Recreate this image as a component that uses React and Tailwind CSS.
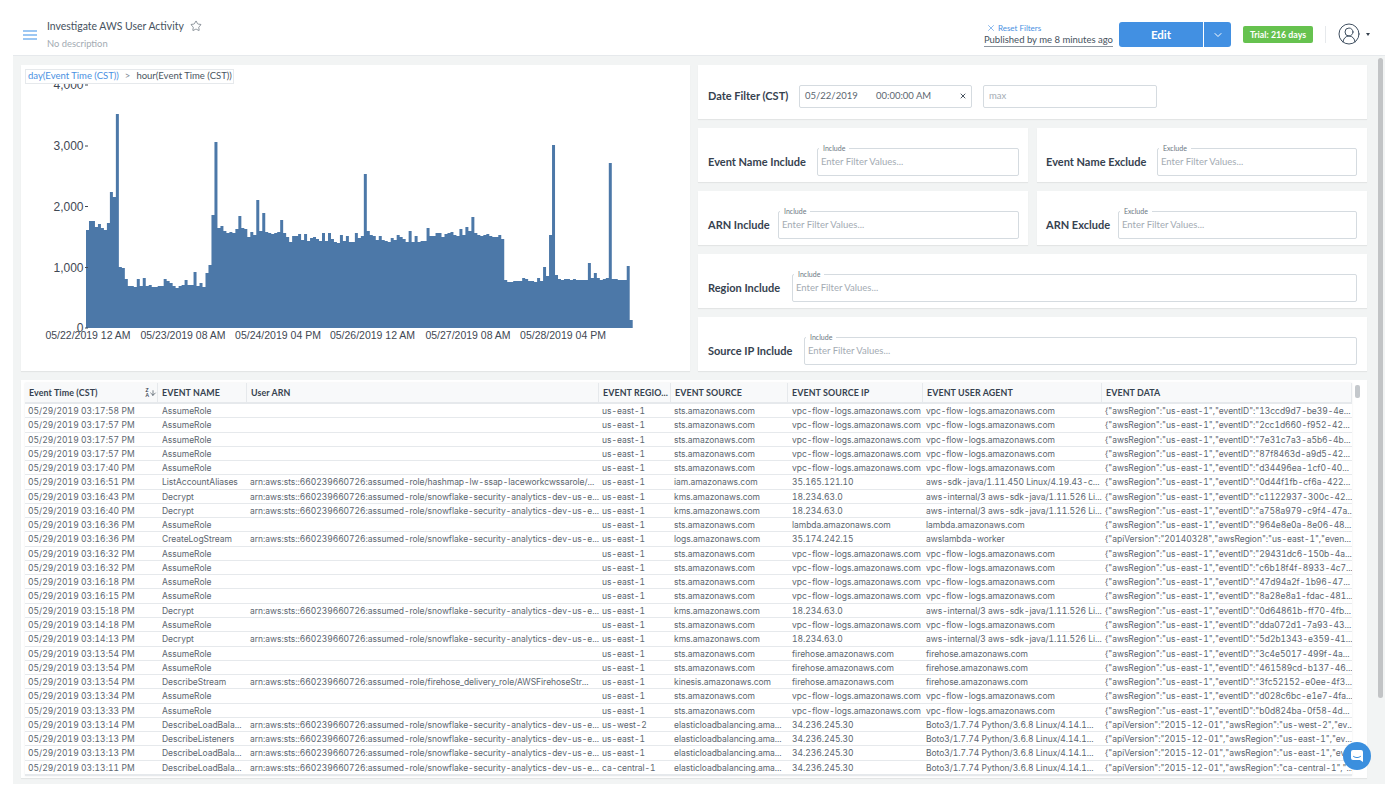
import React from "react";
import { Star, X, ChevronDown, CircleUserRound, ArrowDown } from "lucide-react";

const barHeights = [
  98, 107, 107, 101, 104, 100, 98, 105, 136, 131, 214, 61, 60, 49, 42, 42, 41, 49, 42, 50, 42, 43, 41, 41, 42, 42, 49,
  47, 45, 42, 40, 42, 43, 48, 43, 43, 56, 42, 45, 41, 55, 63, 113, 186, 100, 102, 97, 95, 96, 95, 99, 112, 100, 99, 91,
  96, 93, 128, 97, 115, 96, 95, 94, 95, 96, 108, 95, 91, 86, 92, 92, 94, 88, 94, 87, 90, 91, 89, 87, 95, 87, 95, 89, 86,
  85, 93, 87, 92, 86, 86, 95, 90, 92, 154, 97, 93, 92, 88, 92, 88, 87, 86, 90, 88, 93, 91, 89, 86, 97, 86, 92, 86, 87,
  87, 100, 92, 92, 95, 95, 91, 94, 95, 96, 93, 92, 99, 93, 101, 97, 111, 95, 93, 92, 93, 94, 92, 91, 91, 93, 89, 48, 46,
  46, 47, 47, 47, 50, 49, 47, 47, 46, 50, 47, 61, 52, 93, 183, 53, 49, 48, 49, 49, 48, 49, 48, 48, 48, 48, 65, 50, 55,
  50, 48, 49, 50, 165, 49, 49, 48, 48, 48, 62, 8,
];

const xLabels = [
  ["05/22/2019 12 AM", 88],
  ["05/23/2019 08 AM", 183],
  ["05/24/2019 04 PM", 278],
  ["05/26/2019 12 AM", 372.5],
  ["05/27/2019 08 AM", 468],
  ["05/28/2019 04 PM", 563],
];

const yLabels = [
  ["4,000", 85],
  ["3,000", 146],
  ["2,000", 206.5],
  ["1,000", 267.5],
  ["0", 328],
];

const barsPath = () => {
  const start = 86;
  const w = (632.7 - start) / barHeights.length;
  let d = `M${start} 328`;
  barHeights.forEach((h, i) => {
    d += `V${328 - h}H${(start + (i + 1) * w).toFixed(2)}`;
  });
  return d + "V328Z";
};

const snowArn = "arn:aws:sts::660239660726:assumed-role/snowflake-security-analytics-dev-us-e...";
const fireArn = "arn:aws:sts::660239660726:assumed-role/firehose_delivery_role/AWSFirehoseStr...";
const lwArn = "arn:aws:sts::660239660726:assumed-role/hashmap-lw-ssap-laceworkcwssarole/...";
const vpc = "vpc-flow-logs.amazonaws.com";
const fh = "firehose.amazonaws.com";
const sts = "sts.amazonaws.com";
const kms = "kms.amazonaws.com";
const internal = "aws-internal/3 aws-sdk-java/1.11.526 Li...";
const boto = "Boto3/1.7.74 Python/3.6.8 Linux/4.14.1...";
const elb = "elasticloadbalancing.ama...";
const ev = (id) => `{"awsRegion":"us-east-1","eventID":"${id}...`;
const api = (r) => `{"apiVersion":"2015-12-01","awsRegion":"${r}","ev...`;

const rows = [
  ["03:17:58", "AssumeRole", "", "us-east-1", sts, vpc, vpc, ev("13ccd9d7-be39-4e")],
  ["03:17:57", "AssumeRole", "", "us-east-1", sts, vpc, vpc, ev("2cc1d660-f952-42")],
  ["03:17:57", "AssumeRole", "", "us-east-1", sts, vpc, vpc, ev("7e31c7a3-a5b6-4b")],
  ["03:17:57", "AssumeRole", "", "us-east-1", sts, vpc, vpc, ev("87f8463d-a9d5-42")],
  ["03:17:40", "AssumeRole", "", "us-east-1", sts, vpc, vpc, ev("d34496ea-1cf0-40")],
  ["03:16:51", "ListAccountAliases", lwArn, "us-east-1", "iam.amazonaws.com", "35.165.121.10", "aws-sdk-java/1.11.450 Linux/4.19.43-c...", ev("0d44f1fb-cf6a-422")],
  ["03:16:43", "Decrypt", snowArn, "us-east-1", kms, "18.234.63.0", internal, ev("c1122937-300c-42")],
  ["03:16:40", "Decrypt", snowArn, "us-east-1", kms, "18.234.63.0", internal, ev("a758a979-c9f4-47a")],
  ["03:16:36", "AssumeRole", "", "us-east-1", sts, "lambda.amazonaws.com", "lambda.amazonaws.com", ev("964e8e0a-8e06-48")],
  ["03:16:36", "CreateLogStream", snowArn, "us-east-1", "logs.amazonaws.com", "35.174.242.15", "awslambda-worker", `{"apiVersion":"20140328","awsRegion":"us-east-1","even...`],
  ["03:16:32", "AssumeRole", "", "us-east-1", sts, vpc, vpc, ev("29431dc6-150b-4a")],
  ["03:16:32", "AssumeRole", "", "us-east-1", sts, vpc, vpc, ev("c6b18f4f-8933-4c7")],
  ["03:16:18", "AssumeRole", "", "us-east-1", sts, vpc, vpc, ev("47d94a2f-1b96-47")],
  ["03:16:15", "AssumeRole", "", "us-east-1", sts, vpc, vpc, ev("8a28e8a1-fdac-481")],
  ["03:15:18", "Decrypt", snowArn, "us-east-1", kms, "18.234.63.0", internal, ev("0d64861b-ff70-4fb")],
  ["03:14:18", "AssumeRole", "", "us-east-1", sts, vpc, vpc, ev("dda072d1-7a93-43")],
  ["03:14:13", "Decrypt", snowArn, "us-east-1", kms, "18.234.63.0", internal, ev("5d2b1343-e359-41")],
  ["03:13:54", "AssumeRole", "", "us-east-1", sts, fh, fh, ev("3c4e5017-499f-4a")],
  ["03:13:54", "AssumeRole", "", "us-east-1", sts, fh, fh, ev("461589cd-b137-46")],
  ["03:13:54", "DescribeStream", fireArn, "us-east-1", "kinesis.amazonaws.com", fh, fh, ev("3fc52152-e0ee-4f3")],
  ["03:13:34", "AssumeRole", "", "us-east-1", sts, vpc, vpc, ev("d028c6bc-e1e7-4fa")],
  ["03:13:33", "AssumeRole", "", "us-east-1", sts, vpc, vpc, ev("b0d824ba-0f58-4d")],
  ["03:13:14", "DescribeLoadBala...", snowArn, "us-west-2", elb, "34.236.245.30", boto, api("us-west-2")],
  ["03:13:13", "DescribeListeners", snowArn, "us-east-1", elb, "34.236.245.30", boto, api("us-east-1")],
  ["03:13:13", "DescribeLoadBala...", snowArn, "us-east-1", elb, "34.236.245.30", boto, api("us-east-1")],
  ["03:13:11", "DescribeLoadBala...", snowArn, "ca-central-1", elb, "34.236.245.30", boto, `{"apiVersion":"2015-12-01","awsRegion":"ca-central-1","...`],
];

const columns = "grid grid-cols-[133px_89px_352px_72px_117px_135px_179px_250px]";

const Chart = () => (
  <div className="relative h-[306px] bg-white shadow-[0_1px_1px_rgba(0,0,0,0.06)]">
    <svg viewBox="21 65 669 306" className="block h-[306px] w-[669px]" fontFamily="'Liberation Sans', sans-serif">
      <path d={barsPath()} fill="#4c78a8" />
      {yLabels.map(([label, y]) => (
        <g key={label}>
          <text x="83.5" y={y + 4} textAnchor="end" fontSize="12" fill="#3f4853">
            {label}
          </text>
          <line x1="85" x2="88" y1={y} y2={y} stroke="#3f4853" strokeWidth="1" />
        </g>
      ))}
      {xLabels.map(([label, x]) => (
        <text key={label} x={x} y="338.5" textAnchor="middle" fontSize="10.5" fill="#3f4853">
          {label}
        </text>
      ))}
    </svg>
    <div className="absolute left-[4px] top-[4px] flex h-[15px] w-[209px] items-center border border-[#e6e9ec] bg-white pl-[2px] text-[9.5px] text-[#4a5561]">
      <span className="text-[#4a90e2]">day(Event Time (CST))</span>
      <span className="mx-[6px] text-[#7b8590]">&gt;</span>
      <span>hour(Event Time (CST))</span>
    </div>
  </div>
);

const FilterInput = ({ legend, className }) => (
  <div className={`relative h-[28px] rounded-[2px] border border-[#d5dbe0] px-[3px] ${className}`}>
    <span className="absolute left-[1px] top-[-5px] bg-white px-[4px] text-[7px] leading-[9px] text-[#6b7682]">{legend}</span>
    <div className="flex h-full items-center text-[9.5px] text-[#a3abb3]">Enter Filter Values...</div>
  </div>
);

const FilterCard = ({ label, legend, labelClass, className }) => (
  <div className={`flex h-[54px] items-end bg-white pb-[6px] shadow-[0_1px_1px_rgba(0,0,0,0.06)] ${className}`}>
    <div className={`flex h-[28px] items-center whitespace-nowrap text-[11px] font-bold text-[#36424f] ${labelClass}`}>{label}</div>
    <FilterInput legend={legend} className="flex-1" />
  </div>
);

const Filters = () => (
  <div className="flex h-[306px] flex-col gap-[9px]">
    <div className="flex h-[54px] items-center bg-white pl-[10px] pt-[8px] shadow-[0_1px_1px_rgba(0,0,0,0.06)]">
      <div className="w-[91px] text-[11px] font-bold text-[#36424f]">Date Filter (CST)</div>
      <div className="flex h-[23px] w-[173px] items-center rounded-[2px] border border-[#d5dbe0] pl-[5px] text-[9.5px] text-[#5c6670]">
        <span className="w-[71px]">05/22/2019</span>
        <span>00:00:00 AM</span>
        <X className="ml-auto mr-[4px] h-[8px] w-[8px] text-[#4a5561]" strokeWidth={3} />
      </div>
      <div className="ml-[11px] flex h-[23px] w-[174px] items-center rounded-[2px] border border-[#d5dbe0] pl-[5px] text-[9.5px] text-[#a3abb3]">max</div>
    </div>
    <div className="grid grid-cols-[330px_330px] gap-x-[9px]">
      <FilterCard label="Event Name Include" legend="Include" labelClass="w-[109px]" className="pl-[10px] pr-[9px]" />
      <FilterCard label="Event Name Exclude" legend="Exclude" labelClass="w-[111px]" className="pl-[9px] pr-[10px]" />
    </div>
    <div className="grid grid-cols-[330px_330px] gap-x-[9px]">
      <FilterCard label="ARN Include" legend="Include" labelClass="w-[70px]" className="pl-[10px] pr-[9px]" />
      <FilterCard label="ARN Exclude" legend="Exclude" labelClass="w-[72px]" className="pl-[9px] pr-[10px]" />
    </div>
    <FilterCard label="Region Include" legend="Include" labelClass="w-[84px]" className="pl-[10px] pr-[10px]" />
    <FilterCard label="Source IP Include" legend="Include" labelClass="w-[96px]" className="pl-[10px] pr-[10px]" />
  </div>
);

const HeaderCell = ({ children, className = "" }) => (
  <div className={`flex h-full items-center whitespace-nowrap border-r border-[#e6e9ec] pl-[4px] pt-[1px] text-[8.9px] font-bold tracking-[0.1px] text-[#36424f] ${className}`}>
    {children}
  </div>
);

const DataTable = () => (
  <div className="flex h-[398px] bg-white pl-[4px] pt-[3px] shadow-[0_1px_1px_rgba(0,0,0,0.06)]">
    <div className="h-[393px] w-[1327px] border-b border-[#e6e9ec] shadow-[0_0_2px_rgba(0,0,0,0.08)]">
      <div className={`${columns} h-[21px] border-b-2 border-[#e6e9ec] bg-[#f8f9fa]`}>
        <HeaderCell className="relative">
          Event Time (CST)
          <span className="absolute right-0 top-[5px] flex items-center text-[#36424f]">
            <span className="flex flex-col text-[5px] leading-[5px]">
              <span>Z</span>
              <span>A</span>
            </span>
            <ArrowDown className="h-[10px] w-[8px]" strokeWidth={2} />
          </span>
        </HeaderCell>
        <HeaderCell>EVENT NAME</HeaderCell>
        <HeaderCell>User ARN</HeaderCell>
        <HeaderCell>EVENT REGIO...</HeaderCell>
        <HeaderCell>EVENT SOURCE</HeaderCell>
        <HeaderCell>EVENT SOURCE IP</HeaderCell>
        <HeaderCell>EVENT USER AGENT</HeaderCell>
        <HeaderCell>EVENT DATA</HeaderCell>
      </div>
      {rows.map((row, i) => (
        <div
          key={i}
          className={`${columns} h-[14.28px] border-b border-[#e6e9ec] font-['Inter',sans-serif] text-[8.5px] leading-[15.5px] tracking-[-0.03px] tabular-nums text-[#5c6670]`}
        >
          <div className="overflow-hidden whitespace-nowrap pl-[3px] tracking-[0.05px]">05/29/2019 {row[0]} PM</div>
          {row.slice(1).map((cell, j) => (
            <div key={j} className={`overflow-hidden whitespace-nowrap ${j === 0 || j === 4 ? "pl-[4px]" : "pl-[3px]"}`}>
              {cell}
            </div>
          ))}
        </div>
      ))}
    </div>
    <div className="ml-[3px] mt-[2px] h-[13px] w-[5px] rounded-[2px] bg-[#c4c8cc]" />
  </div>
);

const App = () => (
  <div className="flex h-[796px] w-[1400px] flex-col overflow-hidden bg-white font-['Lato',sans-serif]">
    <header className="flex h-[55px] items-start">
      <svg viewBox="0 0 14 10" className="ml-[23px] mt-[30px] h-[10px] w-[14px]">
        <path d="M0 1h14M0 5h14M0 9h14" stroke="#3b8fe8" strokeWidth="1.2" />
      </svg>
      <div className="ml-[10px] mt-[18px]">
        <div className="flex items-center text-[10.45px] leading-[16px] text-[#46525e]">
          Investigate AWS User Activity
          <Star className="ml-[6px] h-[12px] w-[12px]" strokeWidth={1.2} />
        </div>
        <div className="mt-[3px] text-[9.4px] leading-[14px] text-[#a3abb3]">No description</div>
      </div>
      <div className="ml-auto mt-[22px] flex flex-col items-start">
        <div className="ml-[2px] flex h-[11px] items-center text-[8px] text-[#4a90e2]">
          <X className="mr-[2px] h-[10px] w-[10px]" strokeWidth={1.5} />
          Reset Filters
        </div>
        <div className="mt-[1px] border-b border-[#8d96a0] text-[9.5px] leading-[12px] text-[#46525e]">Published by me 8 minutes ago</div>
      </div>
      <div className="ml-[6px] mt-[22px] flex h-[25px] w-[112px] rounded-[3px] bg-[#4290e2] text-white">
        <div className="flex w-[85px] items-center justify-center border-r border-white text-[11.5px] font-bold">Edit</div>
        <div className="flex flex-1 items-center justify-center">
          <ChevronDown className="h-[12px] w-[12px]" strokeWidth={2} />
        </div>
      </div>
      <div className="ml-[12px] mt-[26px] flex h-[17px] w-[70px] items-center justify-center rounded-[2px] bg-[#66c24f] text-[8.8px] font-bold text-white">
        Trial: 216 days
      </div>
      <div className="ml-[12px] mt-[26px] h-[17px] w-px bg-[#e6e9ec]" />
      <CircleUserRound className="ml-[11px] mt-[22px] h-[24px] w-[24px] text-[#3f4f60]" strokeWidth={1} />
      <div className="ml-[5px] mr-[30px] mt-[33px] h-0 w-0 border-x-[2.5px] border-t-[3px] border-x-transparent border-t-[#36424f]" />
    </header>
    <main className="ml-[13px] flex h-[729px] w-[1372px] border-t border-[#e6e9ec] bg-[#f2f4f4] pl-[8px] pt-[9px]">
      <div className="w-[1346px]">
        <div className="grid grid-cols-[669px_669px] gap-x-[8px]">
          <Chart />
          <Filters />
        </div>
        <div className="mt-[9px]">
          <DataTable />
        </div>
      </div>
      <div className="relative ml-[11px] w-[6px]">
        <div className="mt-[-7px] h-[640px] w-[5px] rounded-[3px] bg-[#c2c4c6]" />
      </div>
    </main>
    {/* intercom bubble */}
    <div className="fixed left-[1343px] top-[742px] flex h-[28px] w-[28px] items-center justify-center rounded-full bg-[#3b8fde]">
      <svg viewBox="0 0 14 14" className="h-[14px] w-[14px]">
        <path d="M1 3a2 2 0 0 1 2-2h8a2 2 0 0 1 2 2v10l-3-2H3a2 2 0 0 1-2-2Z" fill="#ffffff" />
        <path d="M3.5 7.5c2 1.5 5 1.5 7 0" fill="none" stroke="#3b8fde" strokeWidth="1" strokeLinecap="round" />
      </svg>
    </div>
  </div>
);

export default App;
